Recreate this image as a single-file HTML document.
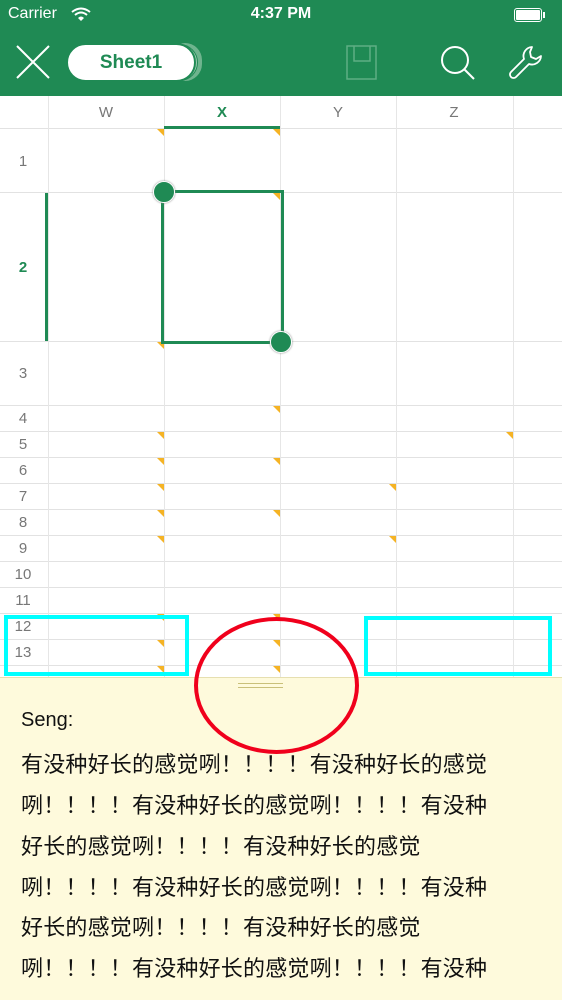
<!DOCTYPE html>
<html><head><meta charset="utf-8"><style>
*{margin:0;padding:0;box-sizing:border-box}
body{width:562px;height:1000px;position:relative;overflow:hidden;background:#fff;font-family:"Liberation Sans",Arial,sans-serif}
.a{position:absolute}
.hl{position:absolute;left:0;width:562px;height:1px;background:#e2e2e2}
.vl{position:absolute;top:96px;width:1px;height:582px;background:#e6e6e6}
.rn{position:absolute;left:0;width:46px;text-align:center;font-size:15px;color:#777}
.ch{position:absolute;top:104px;font-size:15px;color:#777;text-align:center;width:116px}
.tri{position:absolute;width:0;height:0;border-top:7px solid #f5b324;border-left:7px solid transparent}
.txt{position:absolute;left:21px;font-family:"Liberation Sans","Noto Sans CJK SC",sans-serif;font-size:22px;letter-spacing:0.2px;color:#111;white-space:nowrap}
</style></head><body>
<div class="a" style="left:0;top:0;width:562px;height:96px;background:#1f8a54"></div>
<div class="a" style="left:8px;top:5px;color:#fff;font-size:16px">Carrier</div>
<svg class="a" style="left:71px;top:7px" width="20" height="14" viewBox="0 0 20 14"><path d="M1 5 Q10 -2 19 5" stroke="#fff" stroke-width="2" fill="none"/><path d="M4 8 Q10 3 16 8" stroke="#fff" stroke-width="2" fill="none"/><path d="M7 11 L10 14 L13 11 Q10 8 7 11Z" fill="#fff"/></svg>
<div class="a" style="left:0;width:562px;top:5px;text-align:center;color:#fff;font-size:16px;font-weight:bold">4:37 PM</div>
<div class="a" style="left:514px;top:8px;width:28px;height:14px;border:1px solid #fff;border-radius:3px;padding:1px"><div style="background:#fff;width:100%;height:100%;border-radius:1px"></div></div>
<div class="a" style="left:543px;top:12px;width:2px;height:6px;background:#fff"></div>
<svg class="a" style="left:16px;top:45px" width="34" height="34"><path d="M1 1L33 33M33 1L1 33" stroke="#fff" stroke-width="2"/></svg>
<div class="a" style="left:168px;top:43px;width:34px;height:38px;border-radius:19px;background:#6fb48e"></div>
<div class="a" style="left:158px;top:44px;width:40px;height:37px;border-radius:19px;background:#9dcbb0;border:1px solid #1f8a54"></div>
<div class="a" style="left:66px;top:43px;width:130px;height:39px;border-radius:20px;background:#fff;border:2px solid #1f8a54;text-align:center;line-height:35px;color:#1f8a54;font-weight:bold;font-size:19px">Sheet1</div>
<svg class="a" style="left:346px;top:45px" width="32" height="35"><rect x="1" y="1" width="29" height="33" fill="none" stroke="#5fae83" stroke-width="1.5"/><path d="M8 1V16H24V1" fill="none" stroke="#5fae83" stroke-width="1.5"/></svg>
<svg class="a" style="left:440px;top:45px" width="36" height="36"><circle cx="15" cy="15" r="13" fill="none" stroke="#fff" stroke-width="2"/><path d="M24 24L34 34" stroke="#fff" stroke-width="2"/></svg>
<svg class="a" style="left:508px;top:44px" width="36" height="36" viewBox="0 0 36 36"><path d="M24 3a9 9 0 0 0-8 12L3 28a3 3 0 0 0 5 5L21 20a9 9 0 0 0 12-8l-5 3-5-2-1-5z" fill="none" stroke="#fff" stroke-width="1.8" stroke-linejoin="round"/></svg>
<div class="hl" style="top:128px"></div><div class="hl" style="top:192px"></div><div class="hl" style="top:341px"></div>
<div class="hl" style="top:405px"></div><div class="hl" style="top:431px"></div><div class="hl" style="top:457px"></div><div class="hl" style="top:483px"></div><div class="hl" style="top:509px"></div><div class="hl" style="top:535px"></div><div class="hl" style="top:561px"></div><div class="hl" style="top:587px"></div><div class="hl" style="top:613px"></div><div class="hl" style="top:639px"></div><div class="hl" style="top:665px"></div>
<div class="vl" style="left:48px"></div><div class="vl" style="left:164px"></div><div class="vl" style="left:280px"></div><div class="vl" style="left:396px"></div><div class="vl" style="left:513px"></div>
<div class="ch" style="left:48px">W</div><div class="ch" style="left:164px;color:#1f8a54;font-weight:bold">X</div><div class="ch" style="left:280px">Y</div><div class="ch" style="left:396px">Z</div>
<div class="a" style="left:164px;top:126px;width:116px;height:3px;background:#1f8a54"></div>
<div class="rn" style="top:153px">1</div><div class="rn" style="top:259px;color:#1f8a54;font-weight:bold">2</div><div class="rn" style="top:365px">3</div>
<div class="rn" style="top:410px">4</div><div class="rn" style="top:436px">5</div><div class="rn" style="top:462px">6</div><div class="rn" style="top:488px">7</div><div class="rn" style="top:514px">8</div><div class="rn" style="top:540px">9</div><div class="rn" style="top:566px">10</div><div class="rn" style="top:592px">11</div><div class="rn" style="top:618px">12</div><div class="rn" style="top:644px">13</div>
<div class="tri" style="left:157px;top:129px"></div><div class="tri" style="left:273px;top:129px"></div><div class="tri" style="left:273px;top:193px"></div><div class="tri" style="left:157px;top:342px"></div><div class="tri" style="left:273px;top:406px"></div><div class="tri" style="left:157px;top:432px"></div><div class="tri" style="left:506px;top:432px"></div><div class="tri" style="left:157px;top:458px"></div><div class="tri" style="left:273px;top:458px"></div><div class="tri" style="left:157px;top:484px"></div><div class="tri" style="left:389px;top:484px"></div><div class="tri" style="left:157px;top:510px"></div><div class="tri" style="left:273px;top:510px"></div><div class="tri" style="left:157px;top:536px"></div><div class="tri" style="left:389px;top:536px"></div><div class="tri" style="left:273px;top:614px"></div><div class="tri" style="left:157px;top:614px"></div><div class="tri" style="left:157px;top:640px"></div><div class="tri" style="left:273px;top:640px"></div><div class="tri" style="left:157px;top:666px"></div><div class="tri" style="left:273px;top:666px"></div>
<div class="a" style="left:45px;top:193px;width:3px;height:148px;background:#1f8a54"></div>
<div class="a" style="left:161px;top:190px;width:123px;height:154px;border:3px solid #1f8a54"></div>
<div class="a" style="left:153px;top:181px;width:22px;height:22px;border-radius:50%;background:#1f8a54;border:1.5px solid #fff;box-shadow:0 0 2px #888"></div>
<div class="a" style="left:270px;top:331px;width:22px;height:22px;border-radius:50%;background:#1f8a54;border:1.5px solid #fff;box-shadow:0 0 2px #888"></div>
<div class="a" style="left:0;top:677px;width:562px;height:323px;background:#fefadc;border-top:1px solid #e6dfb0"></div>
<div class="a" style="left:238px;top:683px;width:45px;height:5px;border-top:1px solid #c9c07a;border-bottom:1px solid #c9c07a"></div>
<div class="txt" style="top:709px;font-size:20px;letter-spacing:0">Seng:</div>
<div class="txt" style="top:747px">有没种好长的感觉咧！！！！有没种好长的感觉</div>
<div class="txt" style="top:788px">咧！！！！有没种好长的感觉咧！！！！有没种</div>
<div class="txt" style="top:829px">好长的感觉咧！！！！有没种好长的感觉</div>
<div class="txt" style="top:870px">咧！！！！有没种好长的感觉咧！！！！有没种</div>
<div class="txt" style="top:910px">好长的感觉咧！！！！有没种好长的感觉</div>
<div class="txt" style="top:951px">咧！！！！有没种好长的感觉咧！！！！有没种</div>
<div class="a" style="left:4px;top:615px;width:185px;height:61px;border:4px solid #00ffff"></div>
<div class="a" style="left:364px;top:616px;width:188px;height:60px;border:4px solid #00ffff"></div>
<div class="a" style="left:194px;top:617px;width:165px;height:137px;border:4px solid #f0001c;border-radius:50%"></div>
</body></html>
